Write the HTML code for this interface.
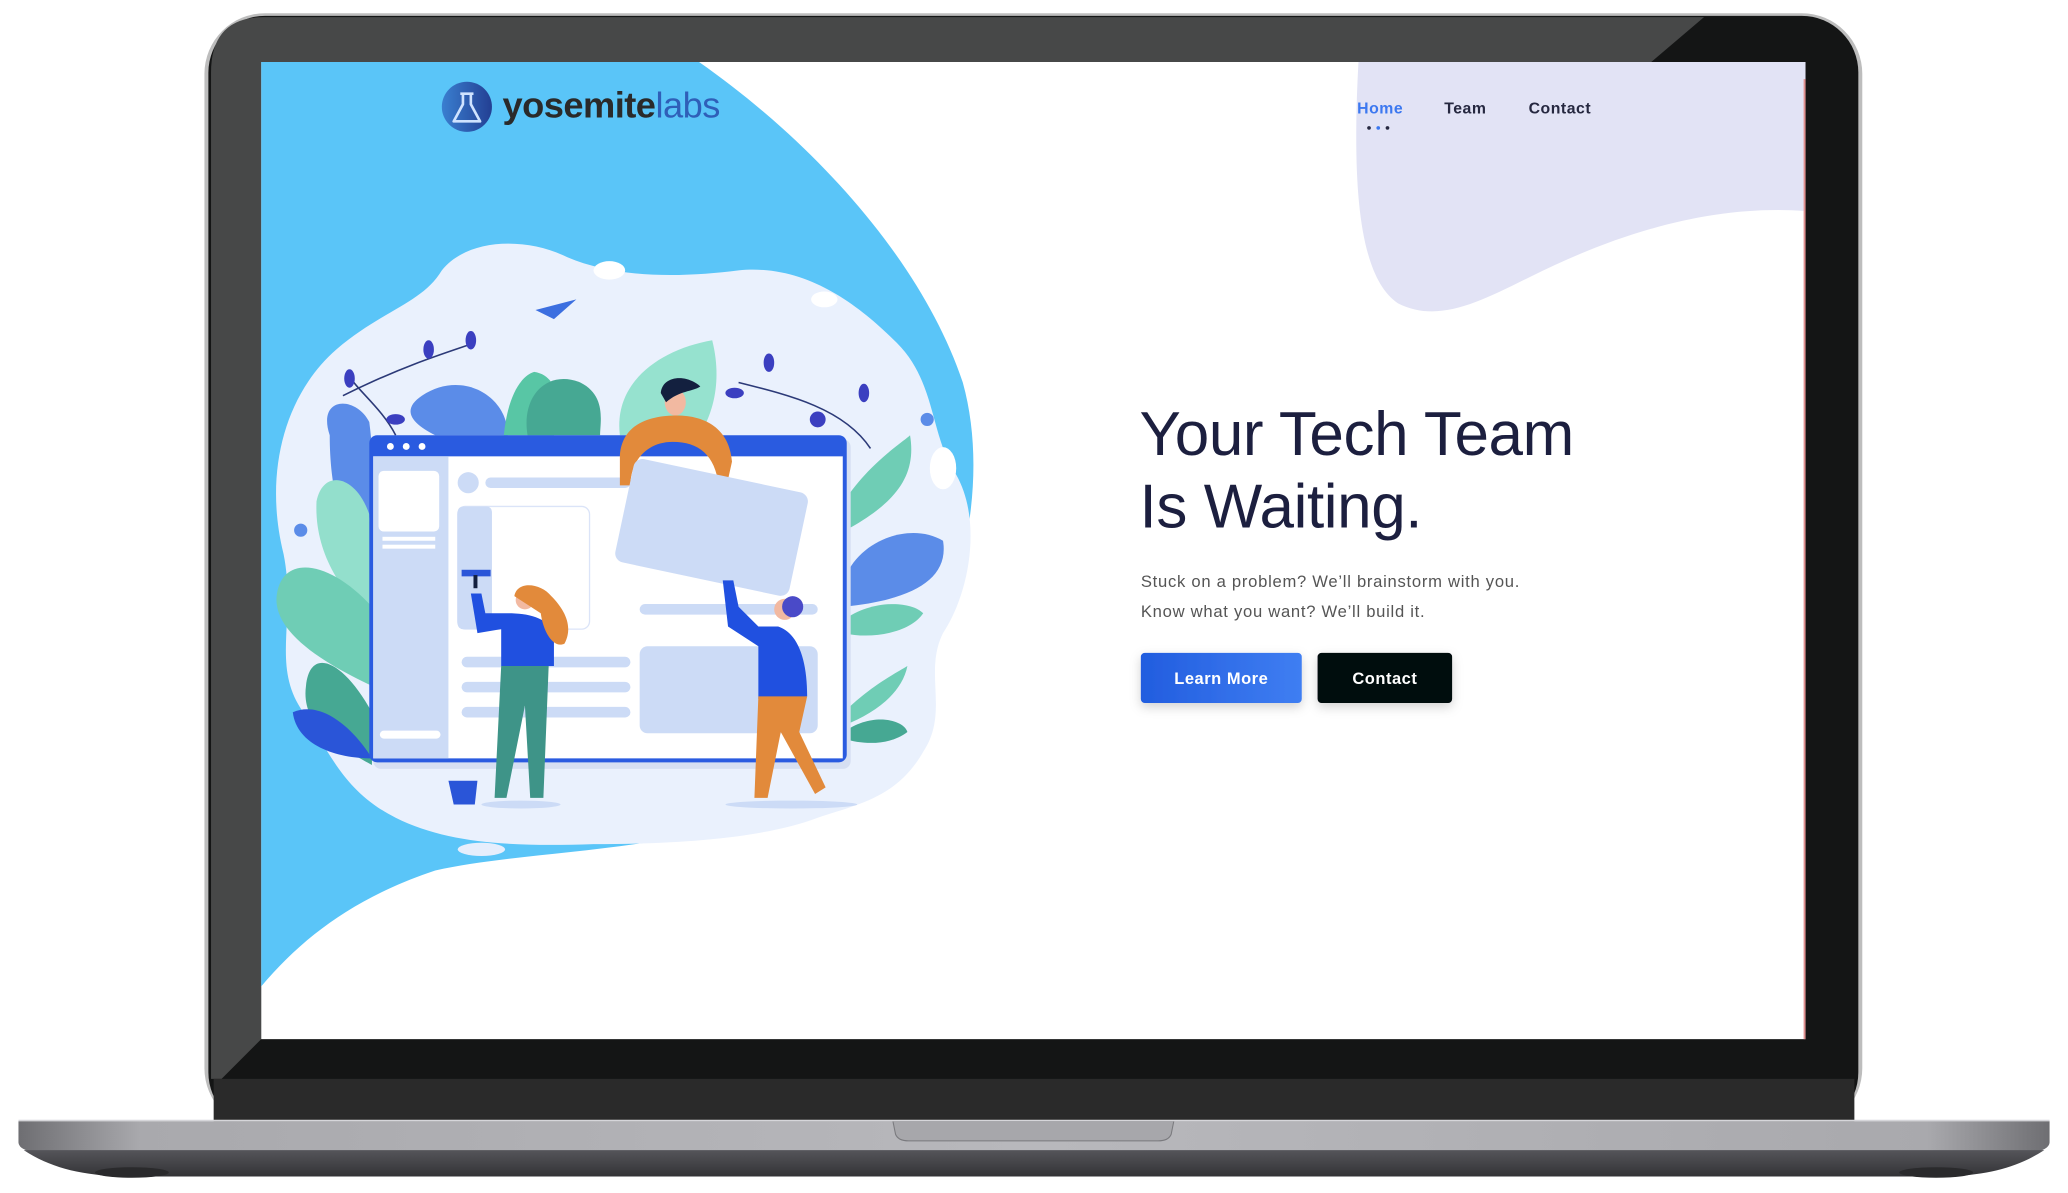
<!DOCTYPE html>
<html><head><meta charset="utf-8"><style>
html,body{margin:0;padding:0;background:#fff;width:2068px;height:1193px;overflow:hidden}
svg{display:block}
</style></head><body>
<svg width="2068" height="1193" viewBox="0 0 2068 1193" xmlns="http://www.w3.org/2000/svg">
<defs>
<linearGradient id="base" x1="0" x2="1" y1="0" y2="0">
<stop offset="0" stop-color="#6e6e72"/><stop offset="0.06" stop-color="#a9a9ad"/><stop offset="0.5" stop-color="#b8b8bc"/><stop offset="0.94" stop-color="#a9a9ad"/><stop offset="1" stop-color="#6e6e72"/></linearGradient>
<linearGradient id="under" x1="0" x2="0" y1="0" y2="1"><stop offset="0" stop-color="#55555a"/><stop offset="1" stop-color="#333336"/></linearGradient>
<linearGradient id="btn" x1="0" x2="1"><stop offset="0" stop-color="#225ddf"/><stop offset="1" stop-color="#3f7ef2"/></linearGradient>
<linearGradient id="logo" x1="0" x2="1"><stop offset="0" stop-color="#3a7fd0"/><stop offset="1" stop-color="#233f93"/></linearGradient>
<filter id="sh" x="-20%" y="-40%" width="140%" height="180%"><feDropShadow dx="0" dy="3" stdDeviation="4" flood-color="#000" flood-opacity="0.18"/></filter>
<clipPath id="scr"><rect x="198" y="47" width="1171" height="741"/></clipPath>
</defs>
<g transform="scale(1.3189)">
<rect x="155" y="10" width="1257" height="846" rx="46" fill="#bdbdbd"/>
<rect x="158" y="12" width="1251" height="844" rx="43" fill="#141515"/>
<path d="M200,13 L1292,13 L1252,47 L198,47 L198,788 L168,818 L160,818 L160,55 Q160,13 200,13Z" fill="#474848"/>
<rect x="162" y="818" width="1244" height="34" fill="#2a2a2a"/>
<g clip-path="url(#scr)">
<rect x="198" y="47" width="1171" height="741" fill="#fff"/>
<path d="M198,47 L530,47 C620,110 700,200 730,290 C755,380 720,500 650,580 C560,650 420,640 330,660 C270,680 230,710 198,748Z" fill="#5ac5f8"/>
<path d="M1030,47 L1369,47 L1369,160 C1300,155 1230,175 1160,210 C1120,230 1090,245 1060,230 C1030,210 1025,140 1030,47Z" fill="#e2e3f5"/>
<path d="M215,420 C200,360 215,300 255,265 C290,235 320,230 335,205 C355,180 400,180 430,195 C470,212 520,210 560,205 C610,200 650,230 680,260 C710,290 705,330 725,360 C745,395 735,450 715,480 C700,510 720,540 700,570 C680,605 650,610 620,620 C580,635 520,640 450,640 C390,642 340,640 300,620 C260,600 250,570 230,540 C205,505 225,470 215,420Z" fill="#eaf1fd"/>
<ellipse cx="462" cy="205" rx="12" ry="7" fill="#fff"/>
<ellipse cx="625" cy="227" rx="10" ry="6" fill="#fff"/>
<ellipse cx="715" cy="355" rx="10" ry="16" fill="#fff"/>
<ellipse cx="365" cy="644" rx="18" ry="5" fill="#e6eefc"/>
<path d="M406,235 L437,227 L420,242Z" fill="#3c6fe0"/>
<path d="M320,300 C350,280 385,300 385,330 L330,330 C310,320 305,310 320,300Z" fill="#5b8ce8"/>
<path d="M382,330 C385,300 395,285 405,282 C425,285 425,310 420,330Z" fill="#58c6a5"/>
<path d="M400,330 C395,300 415,280 440,290 C460,300 455,320 455,330Z" fill="#46a893"/>
<path d="M470,330 C465,290 500,265 540,258 C548,290 540,315 530,330Z" fill="#96e2cf"/>
<path d="M250,330 C240,300 270,300 280,320 C285,360 285,400 270,410 C255,395 250,360 250,330Z" fill="#5b8ce8"/>
<path d="M240,380 C245,355 270,360 280,390 L282,470 C260,450 238,420 240,380Z" fill="#93dfcc"/>
<path d="M210,450 C215,420 250,425 282,460 L282,520 C250,505 205,480 210,450Z" fill="#6fcdb5"/>
<path d="M232,520 C235,490 260,500 282,540 L282,580 C255,565 228,550 232,520Z" fill="#46a893"/>
<path d="M222,540 C245,530 270,555 282,575 C255,575 225,565 222,540Z" fill="#2a55d8"/>
<path d="M640,380 C660,350 685,335 690,330 C695,360 680,380 645,400Z" fill="#6fcdb5"/>
<path d="M640,440 C650,410 690,395 715,410 C720,440 690,455 640,460Z" fill="#5b8ce8"/>
<path d="M640,470 C660,455 690,455 700,465 C690,480 660,485 640,480Z" fill="#6fcdb5"/>
<path d="M640,540 C660,520 680,510 688,505 C684,525 665,540 640,550Z" fill="#6fcdb5"/>
<path d="M640,555 C660,540 685,545 688,555 C675,565 655,565 640,560Z" fill="#46a893"/>
<path d="M260,300 C300,280 330,270 360,260 M560,290 C600,300 640,310 660,340 M300,330 C290,310 270,295 265,285" stroke="#2c3a78" stroke-width="1.2" fill="none"/>
<g fill="#3b3fc0"><ellipse cx="265" cy="287" rx="4" ry="7"/><ellipse cx="325" cy="265" rx="4" ry="7"/><ellipse cx="357" cy="258" rx="4" ry="7"/><ellipse cx="583" cy="275" rx="4" ry="7"/><ellipse cx="557" cy="298" rx="7" ry="4"/><ellipse cx="655" cy="298" rx="4" ry="7"/><ellipse cx="620" cy="318" rx="6" ry="6"/><ellipse cx="300" cy="318" rx="7" ry="4"/></g>
<circle cx="703" cy="318" r="5" fill="#5b8ce8"/><circle cx="228" cy="402" r="5" fill="#5b8ce8"/>
<rect x="283" y="333" width="362" height="250" rx="6" fill="#d6dff2"/>
<rect x="280" y="330" width="362" height="248" rx="6" fill="#2a5be0"/>
<rect x="283" y="346" width="356" height="229" fill="#fff"/>
<rect x="283" y="346" width="57" height="229" fill="#ccdbf6"/>
<circle cx="296" cy="338.5" r="2.6" fill="#fff"/><circle cx="308" cy="338.5" r="2.6" fill="#fff"/><circle cx="320" cy="338.5" r="2.6" fill="#fff"/>
<rect x="287" y="357" width="46" height="46" rx="4" fill="#fff"/>
<rect x="290" y="407" width="40" height="3" fill="#fff"/><rect x="290" y="413" width="40" height="3" fill="#fff"/>
<rect x="288" y="554" width="46" height="6" rx="3" fill="#fff"/>
<circle cx="355" cy="366" r="8" fill="#ccdbf6"/>
<rect x="368" y="362" width="110" height="8" rx="4" fill="#ccdbf6"/>
<rect x="347" y="384" width="100" height="93" rx="6" fill="#fff" stroke="#dbe4f8" stroke-width="1"/>
<rect x="347" y="384" width="26" height="93" rx="4" fill="#ccdbf6"/>
<rect x="350" y="498" width="128" height="8" rx="4" fill="#ccdbf6"/>
<rect x="350" y="517" width="128" height="8" rx="4" fill="#ccdbf6"/>
<rect x="350" y="536" width="128" height="8" rx="4" fill="#ccdbf6"/>
<rect x="485" y="458" width="135" height="8" rx="4" fill="#ccdbf6"/>
<rect x="485" y="490" width="135" height="66" rx="6" fill="#ccdbf6"/>
<path d="M470,345 C472,320 495,315 513,315 C535,315 553,325 555,350 L551,368 L545,368 C542,345 530,335 510,335 C490,335 478,350 478,368 L470,368Z" fill="#e28a3b"/>
<ellipse cx="512" cy="305" rx="8" ry="10" fill="#f2b9a1"/>
<path d="M501,298 C502,285 520,283 531,293 C525,297 515,296 505,305Z" fill="#13203f"/>
<rect x="472" y="360" width="135" height="80" rx="7" fill="#ccdbf6" transform="rotate(12 540 400)"/>
<rect x="350" y="432" width="22" height="5" fill="#2a55d8"/><rect x="359" y="436" width="3" height="10" fill="#13203f"/>
<path d="M357,450 L362,480 L380,477 L380,505 L420,505 L420,480 C415,468 400,465 385,465 L368,465 L365,450Z" fill="#2050e0"/>
<path d="M380,505 L375,605 L384,605 L398,535 L402,605 L412,605 L416,505Z" fill="#3e9488"/>
<circle cx="398" cy="455" r="7" fill="#f2b9a1"/>
<path d="M390,452 C392,440 410,442 418,452 C428,462 435,475 428,488 C420,492 412,480 410,465 Z" fill="#e28a3b"/>
<ellipse cx="395" cy="610" rx="30" ry="3" fill="#ccdbf6"/>
<path d="M340,592 L362,592 L360,610 L344,610Z" fill="#2a55d8"/>
<path d="M548,440 L552,475 L575,490 L575,530 L612,528 C612,500 605,480 590,475 L575,475 L560,460 L556,440Z" fill="#2050e0"/>
<path d="M575,528 L572,605 L582,605 L592,555 L618,602 L626,597 L606,555 L612,528Z" fill="#e28a3b"/>
<circle cx="595" cy="462" r="8" fill="#f2b9a1"/><circle cx="601" cy="460" r="8" fill="#4a4ac8"/>
<ellipse cx="600" cy="610" rx="50" ry="3" fill="#ccdbf6"/>
<circle cx="354" cy="81" r="19" fill="url(#logo)"/>
<path d="M349,71 L359,71 M351,71 L351,79 L344,92 L364,92 L357,79 L357,71" stroke="#cfe3ff" stroke-width="2" fill="none" stroke-linejoin="round"/>
<text x="381" y="89" font-family="Liberation Sans, sans-serif" font-size="27.5" font-weight="bold" fill="#2a2a2a" letter-spacing="-0.4">yosemite<tspan fill="#2f5fb8" font-weight="normal">labs</tspan></text>
<g font-family="Liberation Sans, sans-serif" font-size="12" font-weight="bold" letter-spacing="0.4">
<text x="1029" y="86" fill="#3c78f0">Home</text>
<text x="1095" y="86" fill="#262840">Team</text>
<text x="1159" y="86" fill="#262840">Contact</text>
</g>
<circle cx="1038" cy="97" r="1.4" fill="#262840"/><circle cx="1045" cy="97" r="1.4" fill="#3c78f0"/><circle cx="1052" cy="97" r="1.4" fill="#262840"/>
<g font-family="Liberation Sans, sans-serif" fill="#1c1f3f" font-size="47" letter-spacing="-0.3">
<text x="864" y="345">Your Tech Team</text>
<text x="864" y="400">Is Waiting.</text>
</g>
<g font-family="Liberation Sans, sans-serif" fill="#555" font-size="12.6" letter-spacing="0.55">
<text x="865" y="445">Stuck on a problem? We’ll brainstorm with you.</text>
<text x="865" y="468">Know what you want? We’ll build it.</text>
</g>
<rect x="865" y="495" width="122" height="38" rx="3" fill="url(#btn)" filter="url(#sh)"/>
<rect x="999" y="495" width="102" height="38" rx="3" fill="#05070a" filter="url(#sh)"/>
<g font-family="Liberation Sans, sans-serif" font-size="12.5" font-weight="bold" fill="#fff" text-anchor="middle" letter-spacing="0.4">
<text x="926" y="518.5">Learn More</text>
<text x="1050" y="518.5">Contact</text>
</g>
<rect x="1367.5" y="60" width="2" height="728" fill="#e09090"/>
</g>
<path d="M14,850 L1554,850 L1554,866 Q1554,872 1540,874 L28,874 Q14,872 14,866Z" fill="url(#base)"/>
<path d="M18,872 L1550,872 C1530,885 1510,890 1480,892 L88,892 C58,890 38,885 18,872Z" fill="url(#under)"/>
<ellipse cx="100" cy="889" rx="28" ry="4" fill="#2a2a2c"/><ellipse cx="1468" cy="889" rx="28" ry="4" fill="#2a2a2c"/>
<path d="M677,850 L890,850 L888,860 Q886,865 878,865 L689,865 Q681,865 679,860Z" fill="#a7a7ab" stroke="#7a7a7e" stroke-width="0.8"/>
<rect x="14" y="849" width="1540" height="1.2" fill="#d6d6da"/>
</g>
</svg>
</body></html>
